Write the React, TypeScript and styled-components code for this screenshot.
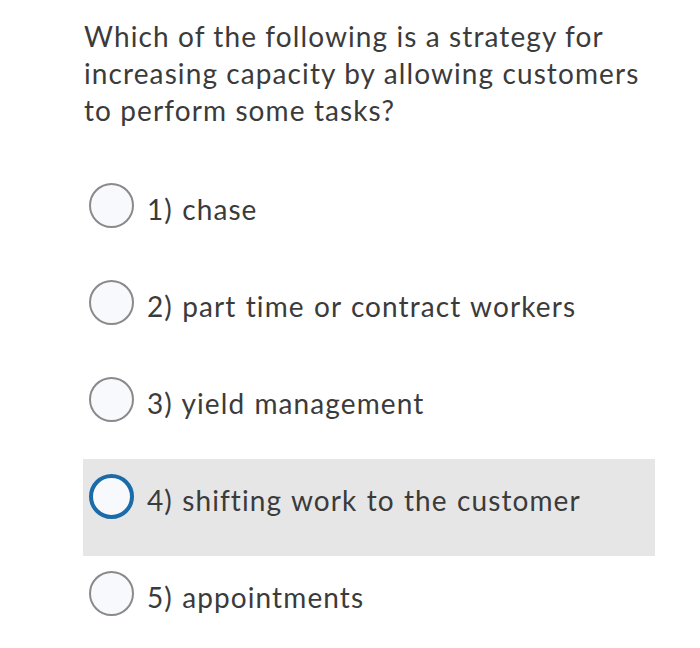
import React from "react";
import styled, { createGlobalStyle } from "styled-components";

const Global = createGlobalStyle`
  body { margin: 0; background: #ffffff; }
  * { box-sizing: border-box; }
`;

const Page = styled.div`
  width: 700px;
  height: 648px;
  padding: 18px 45px 0 83px;
  font-family: Lato, "Open Sans", sans-serif;
  color: #3b3b3b;
  letter-spacing: 1.1px;
`;

const Question = styled.p`
  margin: 0 0 0 1px;
  font-size: 28px;
  line-height: 37px;
  width: 566px;
`;

const Options = styled.div`
  margin-top: 39px;
  display: flex;
  flex-direction: column;
`;

const Row = styled.label<{ $active?: boolean }>`
  display: flex;
  align-items: flex-start;
  gap: 13px;
  height: 97px;
  padding: 15px 0 0 6px;
  background: ${(p) => (p.$active ? "#e6e6e6" : "transparent")};
  font-size: 28px;
`;

const Radio = styled.span<{ $active?: boolean }>`
  flex: none;
  width: 45px;
  height: 45px;
  border-radius: 50%;
  background: #f8f9fc;
  border: ${(p) => (p.$active ? "4px solid #1b6ba8" : "2px solid #8a8a8a")};
`;

const Text = styled.span`
  line-height: 45px;
  margin-top: 4px;
  word-spacing: 1px;
`;

const items = [
  "1) chase",
  "2) part time or contract workers",
  "3) yield management",
  "4) shifting work to the customer",
  "5) appointments",
];

export default function App() {
  return (
    <Page>
      <Global />
      <Question>
        Which of the following is a strategy for increasing capacity by allowing customers to perform some tasks?
      </Question>
      <Options>
        {items.map((t, i) => (
          <Row key={t} $active={i === 3}>
            <Radio $active={i === 3} />
            <Text>{t}</Text>
          </Row>
        ))}
      </Options>
    </Page>
  );
}
